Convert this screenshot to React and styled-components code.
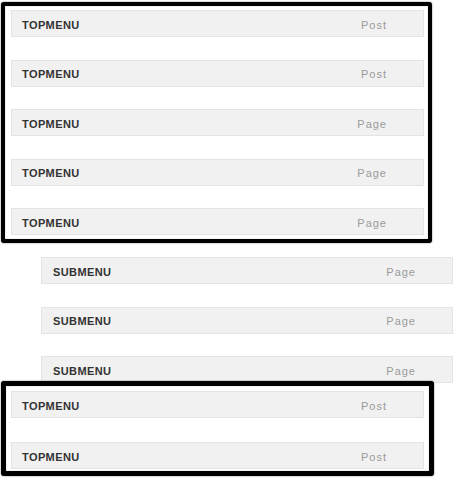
import React from "react";
import styled, { createGlobalStyle } from "styled-components";

const Global = createGlobalStyle`
  html, body {
    margin: 0;
    padding: 0;
    background: #fff;
  }
  body {
    font-family: "Liberation Sans", Arial, sans-serif;
  }
`;

const Page = styled.div`
  width: 460px;
  height: 480px;
  padding: 2px 0 0 1px;
  box-sizing: border-box;
  display: flex;
  flex-direction: column;
  align-items: flex-start;
  overflow: hidden;
`;

const Frame = styled.div`
  position: relative;
  box-sizing: border-box;
  width: ${(p) => p.$width}px;
  margin-top: ${(p) => p.$offset || 0}px;
  border: ${(p) => p.$stroke}px solid #000;
  border-radius: 3px;
  box-shadow: 0 0 1.5px rgba(0, 0, 0, 0.7), inset 0 0 1px rgba(0, 0, 0, 0.5);
  background: #fff;
  padding: ${(p) => p.$pad};
  display: flex;
  flex-direction: column;
  gap: ${(p) => p.$gap}px;
`;

const SubList = styled.div`
  margin: 14px 0 0 40px;
  width: 412px;
  display: flex;
  flex-direction: column;
  gap: 22.5px;
`;

const Row = styled.div`
  box-sizing: border-box;
  height: 27px;
  background: #f1f1f1;
  border: 1px solid #e4e4e4;
  display: flex;
  align-items: center;
  justify-content: space-between;
  padding: 2px 36px 0 ${(p) => p.$indent}px;
`;

const Title = styled.span`
  font-size: 11px;
  font-weight: 700;
  letter-spacing: 0.4px;
  color: #333;
`;

const Kind = styled.span`
  font-size: 11px;
  letter-spacing: 1px;
  color: #9a9a9a;
`;

const Item = ({ title, kind, indent = 10 }) => (
  <Row $indent={indent}>
    <Title>{title}</Title>
    <Kind>{kind}</Kind>
  </Row>
);

const topItems = ["Post", "Post", "Page", "Page", "Page"];
const subItems = ["Page", "Page", "Page"];
const tailItems = ["Post", "Post"];

export default function App() {
  return (
    <>
      <Global />
      <Page>
        <Frame $width={431} $stroke={4} $pad="4px 4px 4px 6px" $gap={22.5}>
          {topItems.map((k, i) => (
            <Item key={i} title="TOPMENU" kind={k} />
          ))}
        </Frame>
        <SubList>
          {subItems.map((k, i) => (
            <Item key={i} title="SUBMENU" kind={k} indent={11} />
          ))}
        </SubList>
        <Frame $width={433} $stroke={5} $offset={-2} $pad="5px 5px 2px 5px" $gap={24}>
          {tailItems.map((k, i) => (
            <Item key={i} title="TOPMENU" kind={k} />
          ))}
        </Frame>
      </Page>
    </>
  );
}
